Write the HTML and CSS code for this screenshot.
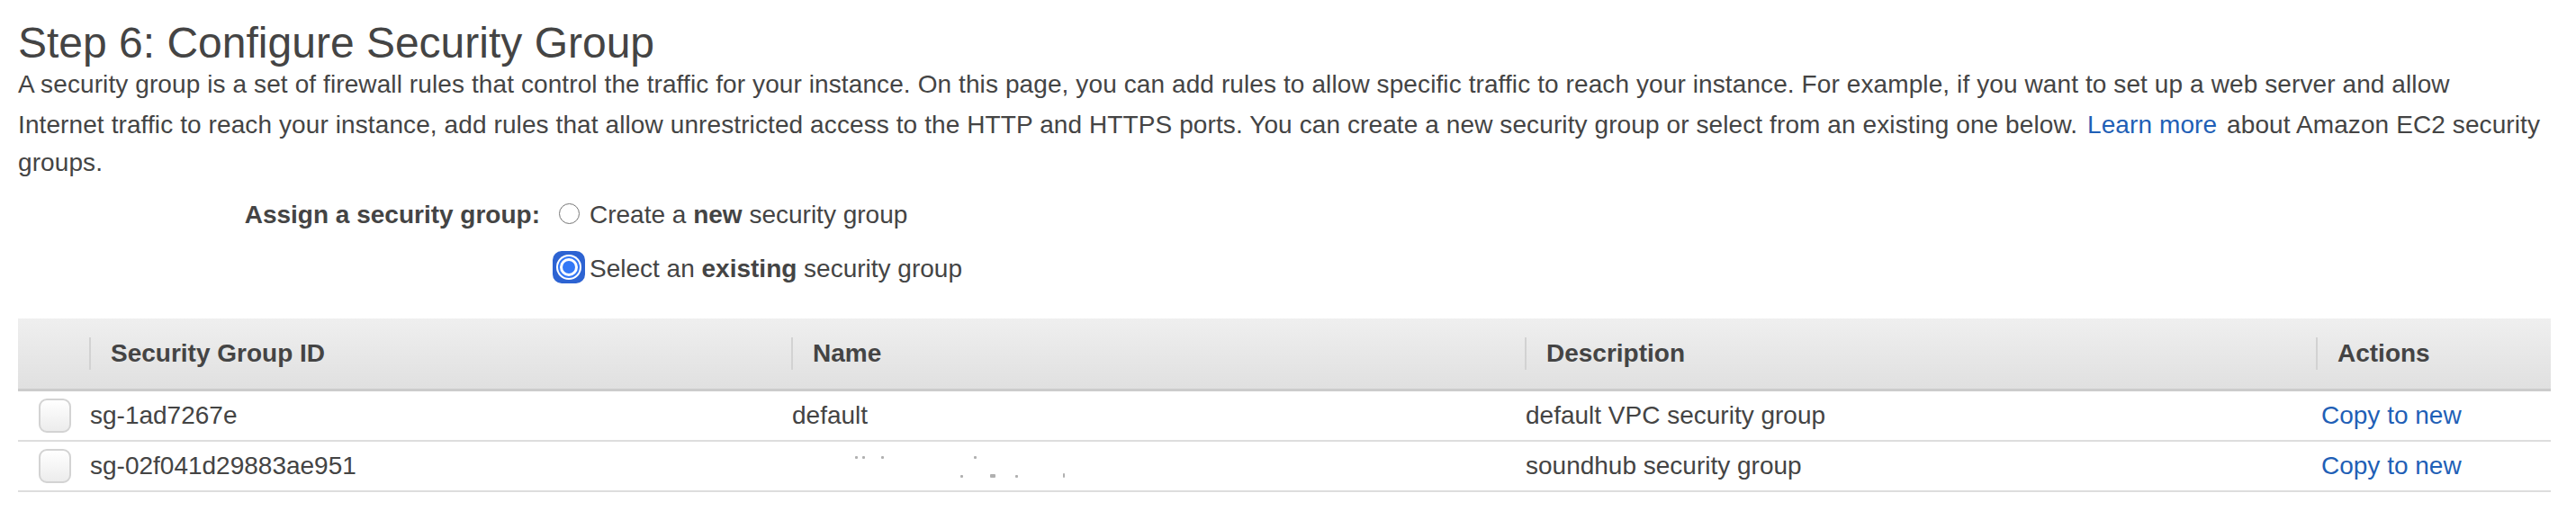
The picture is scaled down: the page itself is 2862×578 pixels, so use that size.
FILE: index.html
```html
<!DOCTYPE html>
<html lang="en">
<head>
<meta charset="utf-8">
<title>Step 6: Configure Security Group</title>
<link rel="stylesheet" href="styles.css">
</head>
<body>
<div class="page">
  <h1 class="title">Step 6: Configure Security Group</h1>
  <p class="intro">A security group is a set of firewall rules that control the traffic for your instance. On this page, you can add rules to allow specific traffic to reach your instance. For example, if you want to set up a web server and allow<br>Internet traffic to reach your instance, add rules that allow unrestricted access to the HTTP and HTTPS ports. You can create a new security group or select from an existing one below. <a class="link learn" href="#">Learn more</a> about Amazon EC2 security groups.</p>

  <div class="assign">
    <div class="assign-label">Assign a security group:</div>
    <div class="options">
      <label class="option">
        <span class="radio-box"><span class="radio"></span></span>
        <span class="opt-text">Create a <b>new</b> security group</span>
      </label>
      <label class="option">
        <span class="radio-box">
          <svg class="radio-checked" width="36" height="36" viewBox="0 0 36 36">
            <rect x="0" y="0" width="36" height="36" rx="10" fill="#2d63d2"/>
            <circle cx="18" cy="18" r="14" fill="#ffffff"/>
            <circle cx="18" cy="18" r="11" fill="none" stroke="#3478f6" stroke-width="2"/>
            <circle cx="18" cy="18" r="7" fill="#3478f6"/>
          </svg>
        </span>
        <span class="opt-text">Select an <b>existing</b> security group</span>
      </label>
    </div>
  </div>

  <div class="table">
    <div class="row head">
      <div class="th"></div>
      <div class="th"><span class="th-label">Security Group ID</span></div>
      <div class="th"><span class="th-label">Name</span></div>
      <div class="th"><span class="th-label">Description</span></div>
      <div class="th"><span class="th-label">Actions</span></div>
    </div>
    <div class="row body">
      <div class="td check"><span class="checkbox"></span></div>
      <div class="td">sg-1ad7267e</div>
      <div class="td">default</div>
      <div class="td">default VPC security group</div>
      <div class="td action"><a class="link" href="#">Copy to new</a></div>
    </div>
    <div class="row body">
      <div class="td check"><span class="checkbox"></span></div>
      <div class="td">sg-02f041d29883ae951</div>
      <div class="td">
        <span class="redacted">
          <span class="dot hi d1"></span><span class="dot hi d2"></span><span class="dot hi d3"></span><span class="dot hi d4"></span>
          <span class="dot lo d5"></span><span class="dot lo d6"></span><span class="dot lo d7"></span><span class="dot lo d8"></span>
        </span>
      </div>
      <div class="td">soundhub security group</div>
      <div class="td action"><a class="link" href="#">Copy to new</a></div>
    </div>
  </div>
</div>
</body>
</html>
```

FILE: styles.css
```css
html, body {
  margin: 0;
  padding: 0;
  background: #ffffff;
}

body {
  font-family: "Liberation Sans", Arial, Helvetica, sans-serif;
  color: #444444;
}

.page {
  width: 2814px;
  padding-left: 20px;
}

.title {
  margin: 21px 0 0;
  font-size: 48px;
  font-weight: normal;
  line-height: 54px;
  color: #444444;
}

.intro {
  width: 2812px;
  margin: -2px 0 0;
  font-size: 28px;
  letter-spacing: 0.1px;
  line-height: 42px;
  color: #444444;
}

.link {
  color: #1f5fb6;
  text-decoration: none;
}

.learn {
  display: inline-block;
  padding-top: 3px;
  margin: 0 3px;
}

.assign {
  display: grid;
  grid-template-columns: 580px 1fr;
  column-gap: 14px;
  margin-top: 17px;
  font-size: 28px;
}

.assign-label {
  font-weight: bold;
  text-align: right;
  line-height: 40px;
}

.options {
  display: flex;
  flex-direction: column;
  row-gap: 20px;
}

.option {
  display: flex;
  align-items: center;
  height: 40px;
  line-height: 40px;
}

.option b {
  font-weight: bold;
}

.radio-box {
  width: 36px;
  height: 36px;
  display: flex;
  align-items: center;
  justify-content: center;
  flex: none;
  margin-top: -4px;
}

.radio {
  width: 21px;
  height: 21px;
  border: 1.5px solid #777777;
  border-radius: 50%;
  background: #ffffff;
}

.radio-checked {
  display: block;
}

.opt-text {
  margin-left: 5px;
}

.table {
  margin-top: 35px;
  font-size: 28px;
}

.row {
  display: grid;
  grid-template-columns: 79px 780px 815px 879px 261px;
}

.head {
  height: 78px;
  background: linear-gradient(#efefef, #e0e0e0);
  border-bottom: 3px solid #cbcbcb;
}

.th {
  display: flex;
  align-items: center;
  font-weight: bold;
}

.th-label {
  display: block;
  border-left: 2px solid #d2d2d2;
  padding-left: 22px;
  line-height: 36px;
}

.body {
  height: 54px;
  border-bottom: 2px solid #dddddd;
}

.td {
  display: flex;
  align-items: center;
  padding-left: 1px;
  white-space: nowrap;
}

.td.action {
  padding-left: 6px;
}

.td.check {
  padding-left: 23px;
}

.checkbox {
  display: block;
  width: 32px;
  height: 34px;
  border: 2px solid #d3d3d3;
  border-radius: 9px;
  background: linear-gradient(#ffffff, #ececec);
}

.redacted {
  display: flex;
  align-items: center;
  height: 40px;
  margin-left: 70px;
}

.dot {
  display: block;
  width: 3px;
  height: 3px;
  background: #b0b0b0;
  border-radius: 1px;
}

.dot.hi {
  align-self: flex-start;
  margin-top: 9px;
}

.dot.lo {
  align-self: flex-end;
  margin-bottom: 7px;
}

.d1 { margin-left: 0; }
.d2 { margin-left: 5px; }
.d3 { margin-left: 18px; }
.d4 { margin-left: 100px; }
.d5 { margin-left: -18px; }
.d6 { margin-left: 30px; width: 6px; height: 4px; }
.d7 { margin-left: 22px; }
.d8 { margin-left: 50px; width: 2px; height: 5px; }
```
